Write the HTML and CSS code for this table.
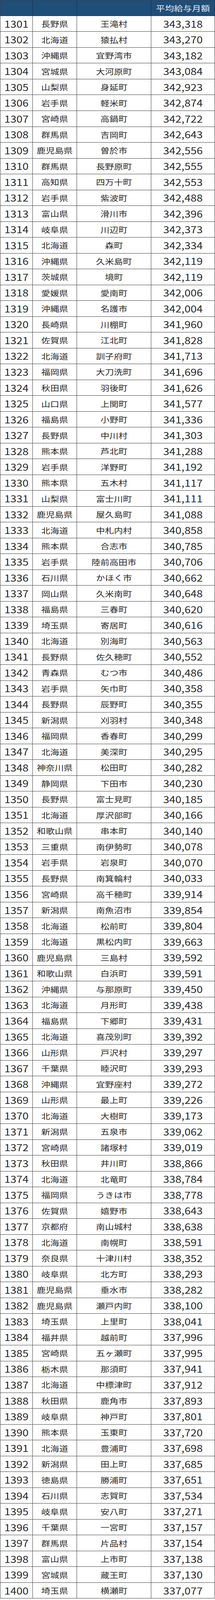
FILE: index.html
```html
<!DOCTYPE html>
<html lang="ja">
<head>
<meta charset="utf-8">
<title>平均給与月額</title>
<link rel="stylesheet" href="styles.css">
</head>
<body>
<div class="sheet" role="table">
<div class="row head" role="row"><div class="cell"></div><div class="cell"></div><div class="cell"></div><div class="cell"><span class="t">平均給与月額</span></div></div>
<div class="row"><div class="cell n"><span class="t">1301</span></div><div class="cell"><span class="t">長野県</span></div><div class="cell"><span class="t">王滝村</span></div><div class="cell n"><span class="t">343,318</span></div></div>
<div class="row"><div class="cell n"><span class="t">1302</span></div><div class="cell"><span class="t">北海道</span></div><div class="cell"><span class="t">猿払村</span></div><div class="cell n"><span class="t">343,270</span></div></div>
<div class="row"><div class="cell n"><span class="t">1303</span></div><div class="cell"><span class="t">沖縄県</span></div><div class="cell"><span class="t">宜野湾市</span></div><div class="cell n"><span class="t">343,182</span></div></div>
<div class="row"><div class="cell n"><span class="t">1304</span></div><div class="cell"><span class="t">宮城県</span></div><div class="cell"><span class="t">大河原町</span></div><div class="cell n"><span class="t">343,084</span></div></div>
<div class="row"><div class="cell n"><span class="t">1305</span></div><div class="cell"><span class="t">山梨県</span></div><div class="cell"><span class="t">身延町</span></div><div class="cell n"><span class="t">342,923</span></div></div>
<div class="row"><div class="cell n"><span class="t">1306</span></div><div class="cell"><span class="t">岩手県</span></div><div class="cell"><span class="t">軽米町</span></div><div class="cell n"><span class="t">342,874</span></div></div>
<div class="row"><div class="cell n"><span class="t">1307</span></div><div class="cell"><span class="t">宮崎県</span></div><div class="cell"><span class="t">高鍋町</span></div><div class="cell n"><span class="t">342,722</span></div></div>
<div class="row"><div class="cell n"><span class="t">1308</span></div><div class="cell"><span class="t">群馬県</span></div><div class="cell"><span class="t">吉岡町</span></div><div class="cell n"><span class="t">342,643</span></div></div>
<div class="row"><div class="cell n"><span class="t">1309</span></div><div class="cell"><span class="t">鹿児島県</span></div><div class="cell"><span class="t">曽於市</span></div><div class="cell n"><span class="t">342,556</span></div></div>
<div class="row"><div class="cell n"><span class="t">1310</span></div><div class="cell"><span class="t">群馬県</span></div><div class="cell"><span class="t">長野原町</span></div><div class="cell n"><span class="t">342,555</span></div></div>
<div class="row"><div class="cell n"><span class="t">1311</span></div><div class="cell"><span class="t">高知県</span></div><div class="cell"><span class="t">四万十町</span></div><div class="cell n"><span class="t">342,553</span></div></div>
<div class="row"><div class="cell n"><span class="t">1312</span></div><div class="cell"><span class="t">岩手県</span></div><div class="cell"><span class="t">紫波町</span></div><div class="cell n"><span class="t">342,488</span></div></div>
<div class="row"><div class="cell n"><span class="t">1313</span></div><div class="cell"><span class="t">富山県</span></div><div class="cell"><span class="t">滑川市</span></div><div class="cell n"><span class="t">342,396</span></div></div>
<div class="row"><div class="cell n"><span class="t">1314</span></div><div class="cell"><span class="t">岐阜県</span></div><div class="cell"><span class="t">川辺町</span></div><div class="cell n"><span class="t">342,373</span></div></div>
<div class="row"><div class="cell n"><span class="t">1315</span></div><div class="cell"><span class="t">北海道</span></div><div class="cell"><span class="t">森町</span></div><div class="cell n"><span class="t">342,334</span></div></div>
<div class="row"><div class="cell n"><span class="t">1316</span></div><div class="cell"><span class="t">沖縄県</span></div><div class="cell"><span class="t">久米島町</span></div><div class="cell n"><span class="t">342,119</span></div></div>
<div class="row"><div class="cell n"><span class="t">1317</span></div><div class="cell"><span class="t">茨城県</span></div><div class="cell"><span class="t">境町</span></div><div class="cell n"><span class="t">342,119</span></div></div>
<div class="row"><div class="cell n"><span class="t">1318</span></div><div class="cell"><span class="t">愛媛県</span></div><div class="cell"><span class="t">愛南町</span></div><div class="cell n"><span class="t">342,006</span></div></div>
<div class="row"><div class="cell n"><span class="t">1319</span></div><div class="cell"><span class="t">沖縄県</span></div><div class="cell"><span class="t">名護市</span></div><div class="cell n"><span class="t">342,004</span></div></div>
<div class="row"><div class="cell n"><span class="t">1320</span></div><div class="cell"><span class="t">長崎県</span></div><div class="cell"><span class="t">川棚町</span></div><div class="cell n"><span class="t">341,960</span></div></div>
<div class="row"><div class="cell n"><span class="t">1321</span></div><div class="cell"><span class="t">佐賀県</span></div><div class="cell"><span class="t">江北町</span></div><div class="cell n"><span class="t">341,828</span></div></div>
<div class="row"><div class="cell n"><span class="t">1322</span></div><div class="cell"><span class="t">北海道</span></div><div class="cell"><span class="t">訓子府町</span></div><div class="cell n"><span class="t">341,713</span></div></div>
<div class="row"><div class="cell n"><span class="t">1323</span></div><div class="cell"><span class="t">福岡県</span></div><div class="cell"><span class="t">大刀洗町</span></div><div class="cell n"><span class="t">341,696</span></div></div>
<div class="row"><div class="cell n"><span class="t">1324</span></div><div class="cell"><span class="t">秋田県</span></div><div class="cell"><span class="t">羽後町</span></div><div class="cell n"><span class="t">341,626</span></div></div>
<div class="row"><div class="cell n"><span class="t">1325</span></div><div class="cell"><span class="t">山口県</span></div><div class="cell"><span class="t">上関町</span></div><div class="cell n"><span class="t">341,577</span></div></div>
<div class="row"><div class="cell n"><span class="t">1326</span></div><div class="cell"><span class="t">福島県</span></div><div class="cell"><span class="t">小野町</span></div><div class="cell n"><span class="t">341,336</span></div></div>
<div class="row"><div class="cell n"><span class="t">1327</span></div><div class="cell"><span class="t">長野県</span></div><div class="cell"><span class="t">中川村</span></div><div class="cell n"><span class="t">341,303</span></div></div>
<div class="row"><div class="cell n"><span class="t">1328</span></div><div class="cell"><span class="t">熊本県</span></div><div class="cell"><span class="t">芦北町</span></div><div class="cell n"><span class="t">341,288</span></div></div>
<div class="row"><div class="cell n"><span class="t">1329</span></div><div class="cell"><span class="t">岩手県</span></div><div class="cell"><span class="t">洋野町</span></div><div class="cell n"><span class="t">341,192</span></div></div>
<div class="row"><div class="cell n"><span class="t">1330</span></div><div class="cell"><span class="t">熊本県</span></div><div class="cell"><span class="t">五木村</span></div><div class="cell n"><span class="t">341,117</span></div></div>
<div class="row"><div class="cell n"><span class="t">1331</span></div><div class="cell"><span class="t">山梨県</span></div><div class="cell"><span class="t">富士川町</span></div><div class="cell n"><span class="t">341,111</span></div></div>
<div class="row"><div class="cell n"><span class="t">1332</span></div><div class="cell"><span class="t">鹿児島県</span></div><div class="cell"><span class="t">屋久島町</span></div><div class="cell n"><span class="t">341,088</span></div></div>
<div class="row"><div class="cell n"><span class="t">1333</span></div><div class="cell"><span class="t">北海道</span></div><div class="cell"><span class="t">中札内村</span></div><div class="cell n"><span class="t">340,858</span></div></div>
<div class="row"><div class="cell n"><span class="t">1334</span></div><div class="cell"><span class="t">熊本県</span></div><div class="cell"><span class="t">合志市</span></div><div class="cell n"><span class="t">340,785</span></div></div>
<div class="row"><div class="cell n"><span class="t">1335</span></div><div class="cell"><span class="t">岩手県</span></div><div class="cell"><span class="t">陸前高田市</span></div><div class="cell n"><span class="t">340,706</span></div></div>
<div class="row"><div class="cell n"><span class="t">1336</span></div><div class="cell"><span class="t">石川県</span></div><div class="cell"><span class="t">かほく市</span></div><div class="cell n"><span class="t">340,662</span></div></div>
<div class="row"><div class="cell n"><span class="t">1337</span></div><div class="cell"><span class="t">岡山県</span></div><div class="cell"><span class="t">久米南町</span></div><div class="cell n"><span class="t">340,648</span></div></div>
<div class="row"><div class="cell n"><span class="t">1338</span></div><div class="cell"><span class="t">福島県</span></div><div class="cell"><span class="t">三春町</span></div><div class="cell n"><span class="t">340,620</span></div></div>
<div class="row"><div class="cell n"><span class="t">1339</span></div><div class="cell"><span class="t">埼玉県</span></div><div class="cell"><span class="t">寄居町</span></div><div class="cell n"><span class="t">340,616</span></div></div>
<div class="row"><div class="cell n"><span class="t">1340</span></div><div class="cell"><span class="t">北海道</span></div><div class="cell"><span class="t">別海町</span></div><div class="cell n"><span class="t">340,563</span></div></div>
<div class="row"><div class="cell n"><span class="t">1341</span></div><div class="cell"><span class="t">長野県</span></div><div class="cell"><span class="t">佐久穂町</span></div><div class="cell n"><span class="t">340,552</span></div></div>
<div class="row"><div class="cell n"><span class="t">1342</span></div><div class="cell"><span class="t">青森県</span></div><div class="cell"><span class="t">むつ市</span></div><div class="cell n"><span class="t">340,486</span></div></div>
<div class="row"><div class="cell n"><span class="t">1343</span></div><div class="cell"><span class="t">岩手県</span></div><div class="cell"><span class="t">矢巾町</span></div><div class="cell n"><span class="t">340,358</span></div></div>
<div class="row"><div class="cell n"><span class="t">1344</span></div><div class="cell"><span class="t">長野県</span></div><div class="cell"><span class="t">辰野町</span></div><div class="cell n"><span class="t">340,355</span></div></div>
<div class="row"><div class="cell n"><span class="t">1345</span></div><div class="cell"><span class="t">新潟県</span></div><div class="cell"><span class="t">刈羽村</span></div><div class="cell n"><span class="t">340,348</span></div></div>
<div class="row"><div class="cell n"><span class="t">1346</span></div><div class="cell"><span class="t">福岡県</span></div><div class="cell"><span class="t">香春町</span></div><div class="cell n"><span class="t">340,299</span></div></div>
<div class="row"><div class="cell n"><span class="t">1347</span></div><div class="cell"><span class="t">北海道</span></div><div class="cell"><span class="t">美深町</span></div><div class="cell n"><span class="t">340,295</span></div></div>
<div class="row"><div class="cell n"><span class="t">1348</span></div><div class="cell"><span class="t">神奈川県</span></div><div class="cell"><span class="t">松田町</span></div><div class="cell n"><span class="t">340,282</span></div></div>
<div class="row"><div class="cell n"><span class="t">1349</span></div><div class="cell"><span class="t">静岡県</span></div><div class="cell"><span class="t">下田市</span></div><div class="cell n"><span class="t">340,230</span></div></div>
<div class="row"><div class="cell n"><span class="t">1350</span></div><div class="cell"><span class="t">長野県</span></div><div class="cell"><span class="t">富士見町</span></div><div class="cell n"><span class="t">340,185</span></div></div>
<div class="row"><div class="cell n"><span class="t">1351</span></div><div class="cell"><span class="t">北海道</span></div><div class="cell"><span class="t">厚沢部町</span></div><div class="cell n"><span class="t">340,166</span></div></div>
<div class="row"><div class="cell n"><span class="t">1352</span></div><div class="cell"><span class="t">和歌山県</span></div><div class="cell"><span class="t">串本町</span></div><div class="cell n"><span class="t">340,140</span></div></div>
<div class="row"><div class="cell n"><span class="t">1353</span></div><div class="cell"><span class="t">三重県</span></div><div class="cell"><span class="t">南伊勢町</span></div><div class="cell n"><span class="t">340,078</span></div></div>
<div class="row"><div class="cell n"><span class="t">1354</span></div><div class="cell"><span class="t">岩手県</span></div><div class="cell"><span class="t">岩泉町</span></div><div class="cell n"><span class="t">340,070</span></div></div>
<div class="row"><div class="cell n"><span class="t">1355</span></div><div class="cell"><span class="t">長野県</span></div><div class="cell"><span class="t">南箕輪村</span></div><div class="cell n"><span class="t">340,033</span></div></div>
<div class="row"><div class="cell n"><span class="t">1356</span></div><div class="cell"><span class="t">宮崎県</span></div><div class="cell"><span class="t">高千穂町</span></div><div class="cell n"><span class="t">339,914</span></div></div>
<div class="row"><div class="cell n"><span class="t">1357</span></div><div class="cell"><span class="t">新潟県</span></div><div class="cell"><span class="t">南魚沼市</span></div><div class="cell n"><span class="t">339,854</span></div></div>
<div class="row"><div class="cell n"><span class="t">1358</span></div><div class="cell"><span class="t">北海道</span></div><div class="cell"><span class="t">松前町</span></div><div class="cell n"><span class="t">339,804</span></div></div>
<div class="row"><div class="cell n"><span class="t">1359</span></div><div class="cell"><span class="t">北海道</span></div><div class="cell"><span class="t">黒松内町</span></div><div class="cell n"><span class="t">339,663</span></div></div>
<div class="row"><div class="cell n"><span class="t">1360</span></div><div class="cell"><span class="t">鹿児島県</span></div><div class="cell"><span class="t">三島村</span></div><div class="cell n"><span class="t">339,592</span></div></div>
<div class="row"><div class="cell n"><span class="t">1361</span></div><div class="cell"><span class="t">和歌山県</span></div><div class="cell"><span class="t">白浜町</span></div><div class="cell n"><span class="t">339,591</span></div></div>
<div class="row"><div class="cell n"><span class="t">1362</span></div><div class="cell"><span class="t">沖縄県</span></div><div class="cell"><span class="t">与那原町</span></div><div class="cell n"><span class="t">339,450</span></div></div>
<div class="row"><div class="cell n"><span class="t">1363</span></div><div class="cell"><span class="t">北海道</span></div><div class="cell"><span class="t">月形町</span></div><div class="cell n"><span class="t">339,438</span></div></div>
<div class="row"><div class="cell n"><span class="t">1364</span></div><div class="cell"><span class="t">福島県</span></div><div class="cell"><span class="t">下郷町</span></div><div class="cell n"><span class="t">339,431</span></div></div>
<div class="row"><div class="cell n"><span class="t">1365</span></div><div class="cell"><span class="t">北海道</span></div><div class="cell"><span class="t">喜茂別町</span></div><div class="cell n"><span class="t">339,392</span></div></div>
<div class="row"><div class="cell n"><span class="t">1366</span></div><div class="cell"><span class="t">山形県</span></div><div class="cell"><span class="t">戸沢村</span></div><div class="cell n"><span class="t">339,297</span></div></div>
<div class="row"><div class="cell n"><span class="t">1367</span></div><div class="cell"><span class="t">千葉県</span></div><div class="cell"><span class="t">睦沢町</span></div><div class="cell n"><span class="t">339,293</span></div></div>
<div class="row"><div class="cell n"><span class="t">1368</span></div><div class="cell"><span class="t">沖縄県</span></div><div class="cell"><span class="t">宜野座村</span></div><div class="cell n"><span class="t">339,272</span></div></div>
<div class="row"><div class="cell n"><span class="t">1369</span></div><div class="cell"><span class="t">山形県</span></div><div class="cell"><span class="t">最上町</span></div><div class="cell n"><span class="t">339,226</span></div></div>
<div class="row"><div class="cell n"><span class="t">1370</span></div><div class="cell"><span class="t">北海道</span></div><div class="cell"><span class="t">大樹町</span></div><div class="cell n"><span class="t">339,173</span></div></div>
<div class="row"><div class="cell n"><span class="t">1371</span></div><div class="cell"><span class="t">新潟県</span></div><div class="cell"><span class="t">五泉市</span></div><div class="cell n"><span class="t">339,062</span></div></div>
<div class="row"><div class="cell n"><span class="t">1372</span></div><div class="cell"><span class="t">宮崎県</span></div><div class="cell"><span class="t">諸塚村</span></div><div class="cell n"><span class="t">339,019</span></div></div>
<div class="row"><div class="cell n"><span class="t">1373</span></div><div class="cell"><span class="t">秋田県</span></div><div class="cell"><span class="t">井川町</span></div><div class="cell n"><span class="t">338,866</span></div></div>
<div class="row"><div class="cell n"><span class="t">1374</span></div><div class="cell"><span class="t">北海道</span></div><div class="cell"><span class="t">北竜町</span></div><div class="cell n"><span class="t">338,784</span></div></div>
<div class="row"><div class="cell n"><span class="t">1375</span></div><div class="cell"><span class="t">福岡県</span></div><div class="cell"><span class="t">うきは市</span></div><div class="cell n"><span class="t">338,778</span></div></div>
<div class="row"><div class="cell n"><span class="t">1376</span></div><div class="cell"><span class="t">佐賀県</span></div><div class="cell"><span class="t">嬉野市</span></div><div class="cell n"><span class="t">338,643</span></div></div>
<div class="row"><div class="cell n"><span class="t">1377</span></div><div class="cell"><span class="t">京都府</span></div><div class="cell"><span class="t">南山城村</span></div><div class="cell n"><span class="t">338,638</span></div></div>
<div class="row"><div class="cell n"><span class="t">1378</span></div><div class="cell"><span class="t">北海道</span></div><div class="cell"><span class="t">南幌町</span></div><div class="cell n"><span class="t">338,591</span></div></div>
<div class="row"><div class="cell n"><span class="t">1379</span></div><div class="cell"><span class="t">奈良県</span></div><div class="cell"><span class="t">十津川村</span></div><div class="cell n"><span class="t">338,352</span></div></div>
<div class="row"><div class="cell n"><span class="t">1380</span></div><div class="cell"><span class="t">岐阜県</span></div><div class="cell"><span class="t">北方町</span></div><div class="cell n"><span class="t">338,293</span></div></div>
<div class="row"><div class="cell n"><span class="t">1381</span></div><div class="cell"><span class="t">鹿児島県</span></div><div class="cell"><span class="t">垂水市</span></div><div class="cell n"><span class="t">338,282</span></div></div>
<div class="row"><div class="cell n"><span class="t">1382</span></div><div class="cell"><span class="t">鹿児島県</span></div><div class="cell"><span class="t">瀬戸内町</span></div><div class="cell n"><span class="t">338,100</span></div></div>
<div class="row"><div class="cell n"><span class="t">1383</span></div><div class="cell"><span class="t">埼玉県</span></div><div class="cell"><span class="t">上里町</span></div><div class="cell n"><span class="t">338,041</span></div></div>
<div class="row"><div class="cell n"><span class="t">1384</span></div><div class="cell"><span class="t">福井県</span></div><div class="cell"><span class="t">越前町</span></div><div class="cell n"><span class="t">337,996</span></div></div>
<div class="row"><div class="cell n"><span class="t">1385</span></div><div class="cell"><span class="t">宮崎県</span></div><div class="cell"><span class="t">五ヶ瀬町</span></div><div class="cell n"><span class="t">337,995</span></div></div>
<div class="row"><div class="cell n"><span class="t">1386</span></div><div class="cell"><span class="t">栃木県</span></div><div class="cell"><span class="t">那須町</span></div><div class="cell n"><span class="t">337,941</span></div></div>
<div class="row"><div class="cell n"><span class="t">1387</span></div><div class="cell"><span class="t">北海道</span></div><div class="cell"><span class="t">中標津町</span></div><div class="cell n"><span class="t">337,912</span></div></div>
<div class="row"><div class="cell n"><span class="t">1388</span></div><div class="cell"><span class="t">秋田県</span></div><div class="cell"><span class="t">鹿角市</span></div><div class="cell n"><span class="t">337,893</span></div></div>
<div class="row"><div class="cell n"><span class="t">1389</span></div><div class="cell"><span class="t">岐阜県</span></div><div class="cell"><span class="t">神戸町</span></div><div class="cell n"><span class="t">337,801</span></div></div>
<div class="row"><div class="cell n"><span class="t">1390</span></div><div class="cell"><span class="t">熊本県</span></div><div class="cell"><span class="t">玉東町</span></div><div class="cell n"><span class="t">337,720</span></div></div>
<div class="row"><div class="cell n"><span class="t">1391</span></div><div class="cell"><span class="t">北海道</span></div><div class="cell"><span class="t">豊浦町</span></div><div class="cell n"><span class="t">337,698</span></div></div>
<div class="row"><div class="cell n"><span class="t">1392</span></div><div class="cell"><span class="t">新潟県</span></div><div class="cell"><span class="t">田上町</span></div><div class="cell n"><span class="t">337,685</span></div></div>
<div class="row"><div class="cell n"><span class="t">1393</span></div><div class="cell"><span class="t">徳島県</span></div><div class="cell"><span class="t">勝浦町</span></div><div class="cell n"><span class="t">337,651</span></div></div>
<div class="row"><div class="cell n"><span class="t">1394</span></div><div class="cell"><span class="t">石川県</span></div><div class="cell"><span class="t">志賀町</span></div><div class="cell n"><span class="t">337,534</span></div></div>
<div class="row"><div class="cell n"><span class="t">1395</span></div><div class="cell"><span class="t">岐阜県</span></div><div class="cell"><span class="t">安八町</span></div><div class="cell n"><span class="t">337,271</span></div></div>
<div class="row"><div class="cell n"><span class="t">1396</span></div><div class="cell"><span class="t">千葉県</span></div><div class="cell"><span class="t">一宮町</span></div><div class="cell n"><span class="t">337,157</span></div></div>
<div class="row"><div class="cell n"><span class="t">1397</span></div><div class="cell"><span class="t">群馬県</span></div><div class="cell"><span class="t">片品村</span></div><div class="cell n"><span class="t">337,154</span></div></div>
<div class="row"><div class="cell n"><span class="t">1398</span></div><div class="cell"><span class="t">富山県</span></div><div class="cell"><span class="t">上市町</span></div><div class="cell n"><span class="t">337,138</span></div></div>
<div class="row"><div class="cell n"><span class="t">1399</span></div><div class="cell"><span class="t">宮城県</span></div><div class="cell"><span class="t">蔵王町</span></div><div class="cell n"><span class="t">337,130</span></div></div>
<div class="row"><div class="cell n"><span class="t">1400</span></div><div class="cell"><span class="t">埼玉県</span></div><div class="cell"><span class="t">横瀬町</span></div><div class="cell n"><span class="t">337,077</span></div></div>
</div>
</body>
</html>
```

FILE: styles.css
```css
html, body {
  margin: 0;
  padding: 0;
  background: #ffffff;
}

body {
  font-family: "Noto Sans CJK JP", "Noto Sans", sans-serif;
  color: #2a2a2a;
}

.sheet {
  width: 550px;
  box-sizing: border-box;
  border-left: 1px solid #404040;
  border-top: 1px solid #404040;
  display: flex;
  flex-direction: column;
}

.row {
  display: grid;
  grid-template-columns: 83px 113px 190px 163px;
  height: 40.53px;
  flex: none;
}

.row.head {
  height: 39.9px;
  background: #1f4e79;
}

.cell {
  display: flex;
  align-items: center;
  justify-content: center;
  box-sizing: border-box;
  border-right: 1px solid #404040;
  border-bottom: 1px solid #404040;
  font-size: 23px;
  line-height: 1;
  white-space: nowrap;
  overflow: hidden;
}

.cell.n {
  font-size: 28px;
}

.t {
  display: inline-block;
  transform: scaleY(0.85);
}

.head .cell {
  color: #e2e8ef;
  border-right-color: #142f4b;
  border-bottom-color: #2b2b2b;
  font-size: 23px;
}
```
